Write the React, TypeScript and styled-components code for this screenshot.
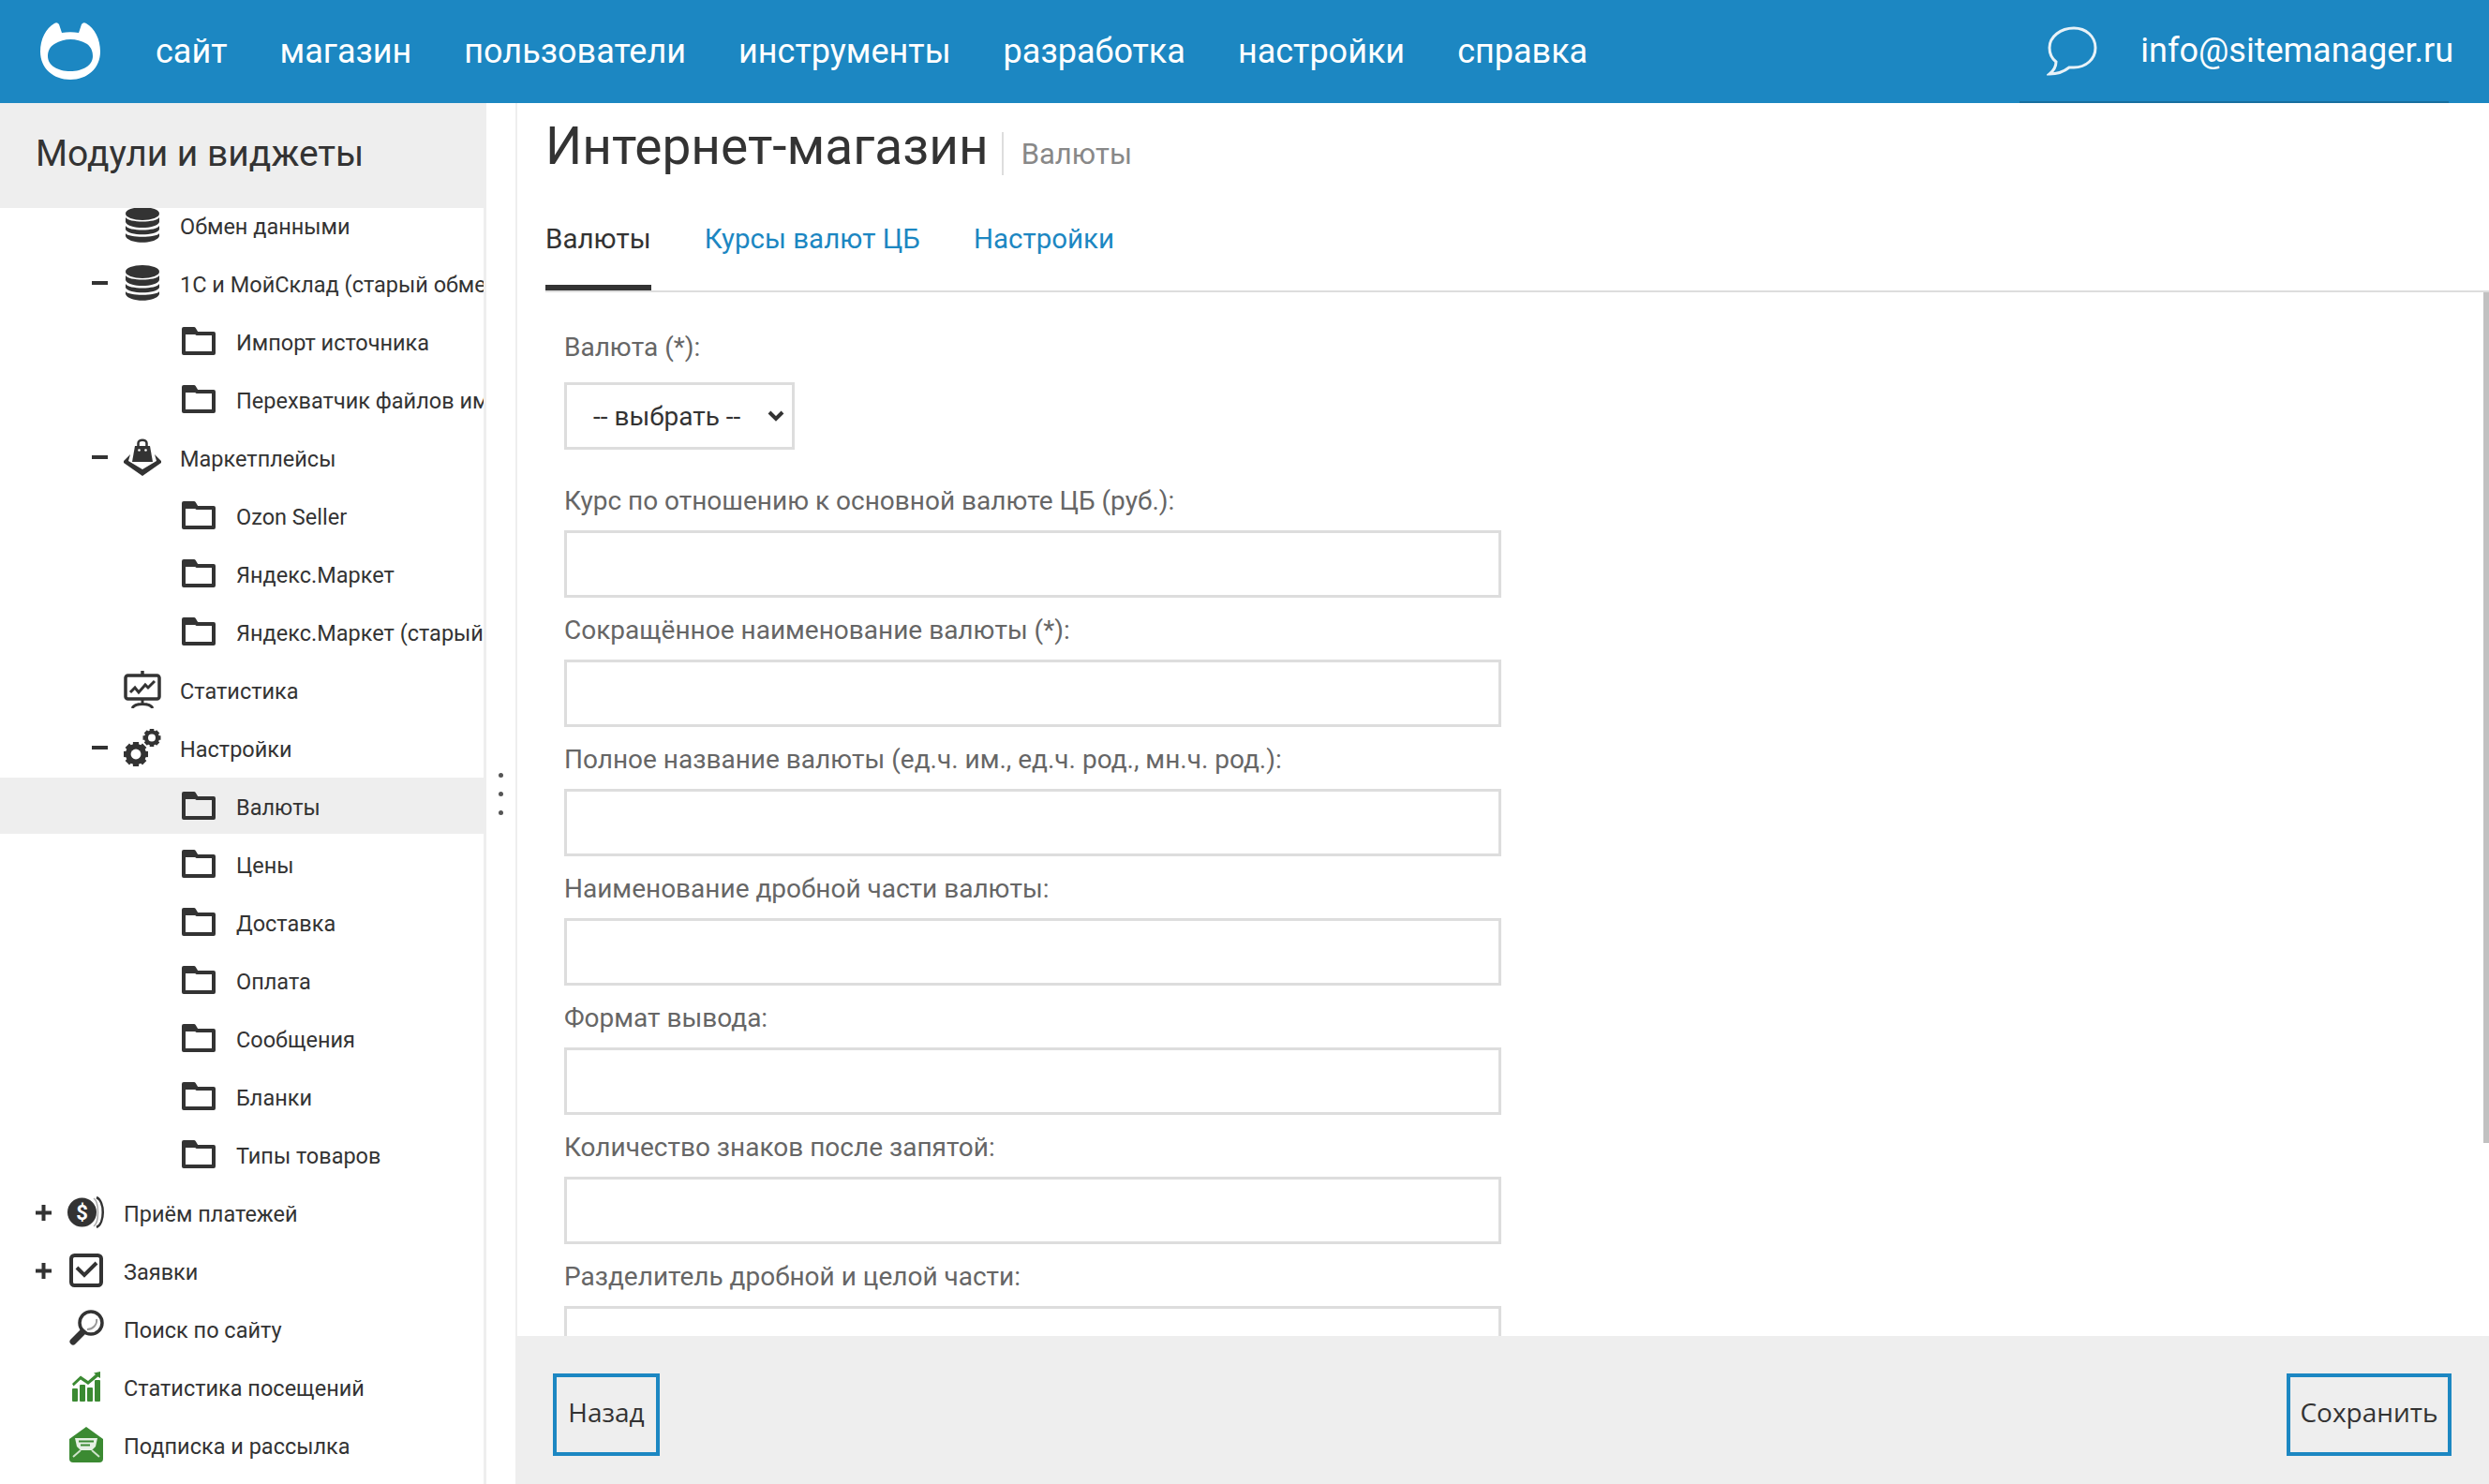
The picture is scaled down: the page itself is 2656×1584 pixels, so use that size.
import React from "react";
import styled, { createGlobalStyle } from "styled-components";

const Global = createGlobalStyle`
  html, body { margin: 0; padding: 0; height: 100%; overflow: hidden; background: #fff; }
  body { font-family: Roboto, "Liberation Sans", sans-serif; color: #333; }
  * { box-sizing: border-box; }
`;

const Page = styled.div`
  width: 2656px;
  height: 1584px;
  display: flex;
  flex-direction: column;
`;

const Header = styled.header`
  height: 110px;
  flex: none;
  background: #1c87c2;
  display: flex;
  align-items: center;
  padding-left: 42px;
  color: #fff;
  font-size: 36px;
`;

const Nav = styled.nav`
  display: flex;
  gap: 56px;
  margin-left: 58px;
  flex: 1;
`;

const NavLink = styled.a`
  color: #fff;
  white-space: nowrap;
`;

const UserBox = styled.div`
  height: 110px;
  display: flex;
  align-items: center;
  gap: 46px;
  padding-left: 29px;
  margin-right: 43px;
  border-bottom: 2px solid #176f9f;
`;

const Email = styled.span`
  margin-right: -5px;
  white-space: nowrap;
`;

const Body = styled.div`
  flex: 1;
  display: flex;
  min-height: 0;
`;

const Sidebar = styled.aside`
  width: 519px;
  flex: none;
  border-right: 3px solid #eee;
  display: flex;
  flex-direction: column;
  overflow: hidden;
`;

const SidebarTitle = styled.h2`
  margin: 0;
  height: 112px;
  flex: none;
  position: relative;
  z-index: 1;
  background: #eee;
  padding: 0 0 4px 38px;
  display: flex;
  align-items: center;
  font-size: 39px;
  font-weight: 400;
  color: #333;
`;

const Tree = styled.div`
  margin-top: -12px;
`;

const Row = styled.div<{ $level: number; $active?: boolean }>`
  height: 60px;
  margin-bottom: 2px;
  padding-left: ${(p) => 36 + p.$level * 60}px;
  display: flex;
  align-items: center;
  background: ${(p) => (p.$active ? "#eee" : "transparent")};
  white-space: nowrap;
  overflow: hidden;
`;

const RowText = styled.span`
  padding-top: 3px;
  font-size: 23.500px;
  color: #333;
`;

const Toggle = styled.span`
  width: 36px;
  flex: none;
  display: flex;
  padding-left: 2px;
`;

const IconSlot = styled.span`
  width: 40px;
  height: 40px;
  flex: none;
  margin-right: 20px;
  display: flex;
  align-items: center;
  justify-content: center;
`;

const Gutter = styled.div`
  width: 33px;
  flex: none;
  border-right: 2px solid #eee;
  display: flex;
  flex-direction: column;
  align-items: center;
  justify-content: center;
  gap: 15px;
`;

const Dot = styled.span`
  width: 5px;
  height: 5px;
  border-radius: 50%;
  background: #555;
`;

const Main = styled.main`
  flex: 1;
  min-width: 0;
  display: flex;
  flex-direction: column;
`;

const TitleRow = styled.div`
  height: 90px;
  flex: none;
  display: flex;
  align-items: center;
  padding-left: 30px;
`;

const Title = styled.h1`
  margin: 2px 0 0;
  font-size: 55px;
  font-weight: 400;
  color: #333;
  line-height: 60px;
`;

const SubTitle = styled.span`
  margin: 18px 0 0 14px;
  padding-left: 19px;
  height: 46px;
  display: flex;
  align-items: center;
  border-left: 2px solid #ddd;
  font-size: 31px;
  color: #888;
`;

const Tabs = styled.div`
  height: 112px;
  flex: none;
  margin-left: 30px;
  display: flex;
  gap: 57px;
  border-bottom: 2px solid #ddd;
`;

const Tab = styled.a<{ $active?: boolean }>`
  height: 110px;
  padding-top: 5px;
  display: flex;
  align-items: center;
  font-size: 29.500px;
  color: ${(p) => (p.$active ? "#333" : "#1c87c2")};
  border-bottom: 6px solid ${(p) => (p.$active ? "#333" : "transparent")};
`;

const ContentArea = styled.div`
  flex: 1;
  min-height: 0;
  position: relative;
`;

const ScrollThumb = styled.div`
  position: absolute;
  top: 0;
  right: 0;
  width: 6px;
  height: 908px;
  background: #c1c1c1;
`;

const Scroller = styled.div`
  height: 100%;
  overflow: hidden;
  padding: 40px 0 0 50px;
`;

const Field = styled.div`
  display: flex;
  flex-direction: column;
  align-items: flex-start;
`;

const Label = styled.label`
  height: 66px;
  padding-top: 15px;
  font-size: 28px;
  line-height: 40px;
  color: #666;
`;

const SelectLabel = styled(Label)`
  height: 56px;
  line-height: 38px;
  padding-top: 0;
`;

const TextInput = styled.input`
  width: 1000px;
  height: 72px;
  border: 3px solid #ddd;
  background: #fff;
  outline: none;
  display: block;
`;

const chevron =
  "data:image/svg+xml,%3Csvg xmlns='http://www.w3.org/2000/svg' width='18' height='12' viewBox='0 0 18 12'%3E%3Cpath d='M2 2 L9 9 L16 2' fill='none' stroke='%23333' stroke-width='4'/%3E%3C/svg%3E";

const Select = styled.select`
  appearance: none;
  width: 246px;
  height: 72px;
  margin-bottom: 20px;
  padding-left: 28px;
  border: 3px solid #ddd;
  border-radius: 0;
  background: #fff url("${chevron}") no-repeat 214px 50%;
  font-family: Roboto, sans-serif;
  font-size: 28px;
  color: #333;
  outline: none;
`;

const Footer = styled.footer`
  height: 158px;
  flex: none;
  margin-left: -2px;
  background: #eee;
  display: flex;
  justify-content: space-between;
  padding: 40px 40px 0 40px;
`;

const Button = styled.button<{ $width: number }>`
  height: 88px;
  width: ${(p) => p.$width}px;
  padding: 0 0 6px;
  border: 4px solid #1c87c2;
  background: #eee;
  font-family: "Open Sans", sans-serif;
  font-size: 28px;
  color: #333;
`;

const Svg = styled.svg`
  display: block;
  flex: none;
`;

const Logo = () => (
  <Svg width="66" height="62" viewBox="0 0 66 62">
    <path
      fillRule="evenodd"
      fill="#fff"
      d="M16 1 Q19 -1 21 2 L24 11 Q33 9.500 42 11 L45 2 Q47 -1 50 1 C59 6 65 18 65 31 C65 49 51 61 33 61 C15 61 1 49 1 31 C1 18 7 6 16 1 Z M16 23 Q33 13 51 23 C56 27 57 32 57 36 C57 46 46 52 33 52 C20 52 9 46 9 36 C9 31 11 26 16 23 Z"
    />
  </Svg>
);

const Chat = () => (
  <Svg width="54" height="54" viewBox="0 0 54 54" fill="none" stroke="#e8f2f8" strokeWidth="3">
    <path d="M29 3 C 42 3, 52 12, 52 24 C 52 36, 42 45, 29 45 L 24 45 C 19 49, 12 52, 3 52 C 8 48, 10 44, 10 39 C 5 35, 3 30, 3 24 C 3 12, 15 3, 29 3 Z" />
  </Svg>
);

const Minus = () => <Svg width="17" height="4" viewBox="0 0 17 4"><rect width="17" height="4" fill="#333" /></Svg>;
const Plus = () => (
  <Svg width="17" height="17" viewBox="0 0 17 17">
    <path d="M0 6.500H6.500V0H10.500V6.500H17V10.500H10.500V17H6.500V10.500H0Z" fill="#333" />
  </Svg>
);

const Database = () => (
  <Svg width="38" height="38" viewBox="0 0 38 38" fill="#333">
    <ellipse cx="19" cy="7" rx="18" ry="7" />
    <path d="M1 11 C 4 17, 34 17, 37 11 V16 C 34 24, 4 24, 1 16 Z" />
    <path d="M1 20 C 4 26, 34 26, 37 20 V24 C 34 31, 4 31, 1 24 Z" />
    <path d="M1 28 C 4 33, 34 33, 37 28 V31 C 34 40, 4 40, 1 31 Z" />
  </Svg>
);

const Folder = () => (
  <Svg width="36" height="30" viewBox="0 0 36 30" fill="none" stroke="#333" strokeWidth="4" strokeLinejoin="round">
    <path d="M2 8 V28 H34 V7 H16 L13 2 H2 Z" />
    <path d="M2 6 H14" />
  </Svg>
);

const Market = () => (
  <Svg width="40" height="40" viewBox="0 0 40 40" fill="#333">
    <path d="M12 8 H28 L31 25 H9 Z" />
    <path d="M15.500 9 V5 C 15.500 0.500, 24.500 0.500, 24.500 5 V9" fill="none" stroke="#333" strokeWidth="2.500" />
    <circle cx="16.500" cy="12.500" r="1.300" fill="#fff" />
    <circle cx="23.500" cy="12.500" r="1.300" fill="#fff" />
    <path d="M7 17 L0 24 V26 L20 40 L40 26 V24 L33 17 L35 24 L20 33 L5 24 Z" />
  </Svg>
);

const Presentation = () => (
  <Svg width="40" height="40" viewBox="0 0 40 40" fill="none" stroke="#333">
    <path d="M20 0 V5" strokeWidth="3.500" />
    <rect x="2" y="5" width="36" height="25" rx="2.500" strokeWidth="3.500" />
    <path d="M7 23 L12 18 L16 23 L23 15 L26 18 L33 11" strokeWidth="3" />
    <path d="M20 30 V35 M9 40 C 12 34, 28 34, 31 40" strokeWidth="3" />
  </Svg>
);

const gear = (cx: number, cy: number, r: number, key: string) => (
  <g key={key}>
    <circle cx={cx} cy={cy} r={r * 0.62} fill="none" stroke="#333" strokeWidth={r * 0.46} />
    {[0, 45, 90, 135].map((a) => (
      <rect
        key={a}
        x={cx - r * 0.24}
        y={cy - r}
        width={r * 0.48}
        height={r * 2}
        fill="#333"
        transform={`rotate(${a} ${cx} ${cy})`}
      />
    ))}
    <circle cx={cx} cy={cy} r={r * 0.42} fill="#fff" />
  </g>
);

const Gears = () => (
  <Svg width="40" height="40" viewBox="0 0 40 40">
    {gear(13, 27, 13, "a")}
    {gear(30, 9.500, 9.500, "b")}
  </Svg>
);

const Coin = () => (
  <Svg width="40" height="34" viewBox="0 0 40 34">
    <path d="M28 2 C 34 6, 34 28, 28 32" fill="none" stroke="#aaa" strokeWidth="1.500" />
    <path d="M31 1 C 40 5, 40 29, 31 33" fill="none" stroke="#333" strokeWidth="2.500" />
    <circle cx="15.500" cy="17" r="15.500" fill="#333" />
    <text x="15.500" y="25" textAnchor="middle" fontFamily="Roboto, sans-serif" fontWeight="700" fontSize="22" fill="#fff">$</text>
  </Svg>
);

const Check = () => (
  <Svg width="36" height="36" viewBox="0 0 36 36" fill="none" stroke="#333">
    <rect x="2" y="2" width="32" height="32" rx="3.500" strokeWidth="4" />
    <path d="M8 15 L16 23 L29 10" strokeWidth="4" />
  </Svg>
);

const Search = () => (
  <Svg width="40" height="40" viewBox="0 0 40 40" fill="none" stroke="#333">
    <circle cx="25" cy="14" r="12" strokeWidth="3.500" />
    <path d="M31 10 C 32 16, 27 21, 21 21" strokeWidth="2" stroke="#999" />
    <path d="M16 24 L6 34" strokeWidth="7" strokeLinecap="round" />
  </Svg>
);

const Chart = () => (
  <Svg width="30" height="32" viewBox="0 0 30 32" fill="#3b8a32">
    <rect y="18" width="6" height="14" rx="1" />
    <rect x="8" y="14" width="6" height="18" rx="1" />
    <rect x="16" y="17" width="6" height="15" rx="1" />
    <rect x="24" y="9" width="6" height="23" rx="1" />
    <path d="M0 13 L9 4.500 L17 10 L25 3 L23 1.500 L30 0 L30 7 L27.500 5.500 L17 14 L9 8.500 L1.500 15.500 Z" />
  </Svg>
);

const Mail = () => (
  <Svg width="36" height="38" viewBox="0 0 36 38">
    <path d="M18 0 L36 13 V34 Q36 38 32 38 H4 Q0 38 0 34 V13 Z" fill="#3b8a32" />
    <path d="M6 12 H30 L28 21 L24 25 H12 L8 21 Z" fill="#e6f0e4" />
    <path d="M10 15.500 H26 M12 19.500 H22" stroke="#3b8a32" strokeWidth="2" />
    <path d="M4 32 L12 25 M32 32 L24 25" stroke="#cfe3cb" strokeWidth="2" />
  </Svg>
);

type RowData = { text: string; level: number; icon: React.ReactNode; toggle?: "minus" | "plus"; active?: boolean };

const rows: RowData[] = [
  { text: "Обмен данными", level: 1, icon: <Database /> },
  { text: "1С и МойСклад (старый обмен данными)", level: 1, icon: <Database />, toggle: "minus" },
  { text: "Импорт источника", level: 2, icon: <Folder /> },
  { text: "Перехватчик файлов импорта", level: 2, icon: <Folder /> },
  { text: "Маркетплейсы", level: 1, icon: <Market />, toggle: "minus" },
  { text: "Ozon Seller", level: 2, icon: <Folder /> },
  { text: "Яндекс.Маркет", level: 2, icon: <Folder /> },
  { text: "Яндекс.Маркет (старый формат)", level: 2, icon: <Folder /> },
  { text: "Статистика", level: 1, icon: <Presentation /> },
  { text: "Настройки", level: 1, icon: <Gears />, toggle: "minus" },
  { text: "Валюты", level: 2, icon: <Folder />, active: true },
  { text: "Цены", level: 2, icon: <Folder /> },
  { text: "Доставка", level: 2, icon: <Folder /> },
  { text: "Оплата", level: 2, icon: <Folder /> },
  { text: "Сообщения", level: 2, icon: <Folder /> },
  { text: "Бланки", level: 2, icon: <Folder /> },
  { text: "Типы товаров", level: 2, icon: <Folder /> },
  { text: "Приём платежей", level: 0, icon: <Coin />, toggle: "plus" },
  { text: "Заявки", level: 0, icon: <Check />, toggle: "plus" },
  { text: "Поиск по сайту", level: 0, icon: <Search /> },
  { text: "Статистика посещений", level: 0, icon: <Chart /> },
  { text: "Подписка и рассылка", level: 0, icon: <Mail /> },
];

const navItems = ["сайт", "магазин", "пользователи", "инструменты", "разработка", "настройки", "справка"];

const fields = [
  "Курс по отношению к основной валюте ЦБ (руб.):",
  "Сокращённое наименование валюты (*):",
  "Полное название валюты (ед.ч. им., ед.ч. род., мн.ч. род.):",
  "Наименование дробной части валюты:",
  "Формат вывода:",
  "Количество знаков после запятой:",
  "Разделитель дробной и целой части:",
];

export default function App() {
  return (
    <Page>
      <Global />
      <Header>
        <Logo />
        <Nav>
          {navItems.map((n) => (
            <NavLink key={n}>{n}</NavLink>
          ))}
        </Nav>
        <UserBox>
          <Chat />
          <Email>info@sitemanager.ru</Email>
        </UserBox>
      </Header>
      <Body>
        <Sidebar>
          <SidebarTitle>Модули и виджеты</SidebarTitle>
          <Tree>
            {rows.map((r) => (
              <Row key={r.text} $level={r.level} $active={r.active}>
                <Toggle>
                  {r.toggle === "minus" && <Minus />}
                  {r.toggle === "plus" && <Plus />}
                </Toggle>
                <IconSlot>{r.icon}</IconSlot>
                <RowText>{r.text}</RowText>
              </Row>
            ))}
          </Tree>
        </Sidebar>
        <Gutter>
          <Dot />
          <Dot />
          <Dot />
        </Gutter>
        <Main>
          <TitleRow>
            <Title>Интернет-магазин</Title>
            <SubTitle>Валюты</SubTitle>
          </TitleRow>
          <Tabs>
            <Tab $active>Валюты</Tab>
            <Tab>Курсы валют ЦБ</Tab>
            <Tab>Настройки</Tab>
          </Tabs>
          <ContentArea>
            <Scroller>
              <Field>
                <SelectLabel>Валюта (*):</SelectLabel>
                <Select defaultValue="">
                  <option value="">-- выбрать --</option>
                </Select>
              </Field>
              {fields.map((f) => (
                <Field key={f}>
                  <Label>{f}</Label>
                  <TextInput type="text" />
                </Field>
              ))}
            </Scroller>
            <ScrollThumb />
          </ContentArea>
          <Footer>
            <Button $width={114}>Назад</Button>
            <Button $width={176}>Сохранить</Button>
          </Footer>
        </Main>
      </Body>
    </Page>
  );
}
